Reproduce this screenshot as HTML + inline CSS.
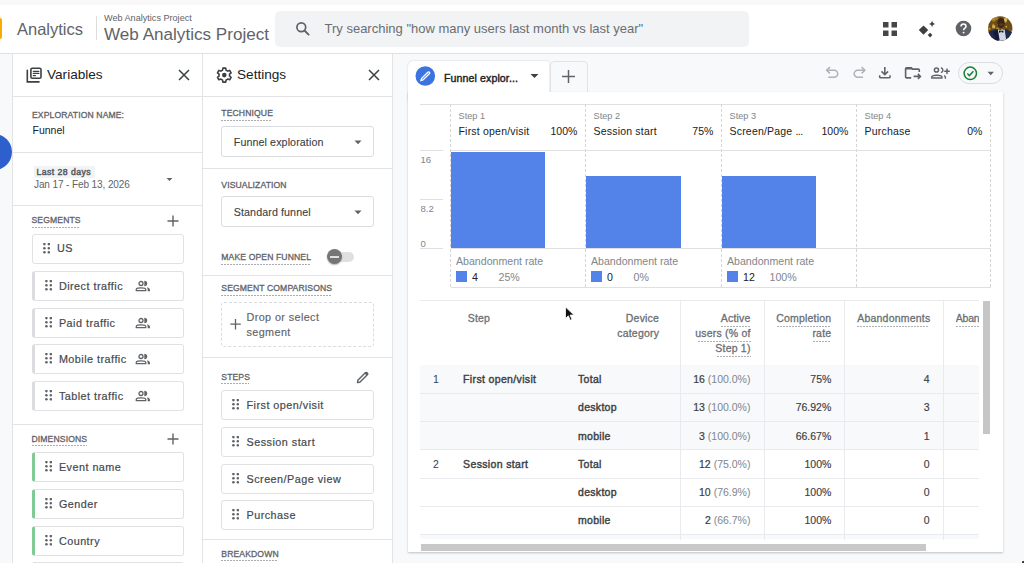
<!DOCTYPE html>
<html><head><meta charset="utf-8"><style>
html,body{margin:0;padding:0;width:1024px;height:563px;overflow:hidden;font-family:"Liberation Sans", sans-serif;}
body{position:relative;}
</style></head><body>
<div style="position:absolute;left:0px;top:0px;width:1024px;height:563px;background:#f8f9fa"></div><div style="position:absolute;left:0px;top:0px;width:1024px;height:5px;background:#f9f9f9"></div><div style="position:absolute;left:0px;top:5px;width:1024px;height:48px;background:#fff"></div><div style="position:absolute;left:0px;top:53px;width:1024px;height:1px;background:#dfe1e5"></div><div style="position:absolute;left:-3px;top:18px;width:5px;height:21px;background:#f9ab00;border-radius:2px"></div><div style="position:absolute;left:17.00px;top:21.03px;font-size:16.5px;line-height:16.5px;color:#5f6368;font-weight:normal;white-space:nowrap;">Analytics</div><div style="position:absolute;left:96px;top:16px;width:1px;height:24px;background:#dadce0"></div><div style="position:absolute;left:104.00px;top:13.50px;font-size:9.1px;line-height:9.1px;color:#5f6368;font-weight:normal;white-space:nowrap;">Web Analytics Project</div><div style="position:absolute;left:104.00px;top:26.02px;font-size:17.1px;line-height:17.1px;color:#5f6368;font-weight:normal;white-space:nowrap;">Web Analytics Project</div><div style="position:absolute;left:275px;top:11px;width:474px;height:36px;background:#f1f3f4;border-radius:5px"></div><svg style="position:absolute;left:294px;top:20px" width="17" height="17" viewBox="0 0 17 17"><circle cx="7.3" cy="7.3" r="4.4" fill="none" stroke="#5f6368" stroke-width="1.7"/><path d="M10.5 10.5 L14.6 14.6" stroke="#5f6368" stroke-width="1.9" stroke-linecap="round"/></svg><div style="position:absolute;left:324.50px;top:21.75px;font-size:13px;line-height:13px;color:#6a6e73;font-weight:normal;white-space:nowrap;">Try searching "how many users last month vs last year"</div><svg style="position:absolute;left:882px;top:21px" width="16" height="16" viewBox="0 0 16 16"><rect x="1" y="1" width="5.5" height="5.5" fill="#444746"/><rect x="9.5" y="1" width="5.5" height="5.5" fill="#444746"/><rect x="1" y="9.5" width="5.5" height="5.5" fill="#444746"/><rect x="9.5" y="9.5" width="5.5" height="5.5" fill="#444746"/></svg><svg style="position:absolute;left:917px;top:19px" width="20" height="20" viewBox="0 0 20 20"><path d="M1.8 11.1 L6.5 6.4 L11.2 11.1 L6.5 15.8 Z" fill="#3c4043"/><path d="M15.1 1.6 C15.5 3.6 16.2 4.6 18.3 5 C16.2 5.4 15.5 6.4 15.1 8.4 C14.7 6.4 14 5.4 11.9 5 C14 4.6 14.7 3.6 15.1 1.6 Z" fill="#3c4043"/><path d="M13.1 13.8 L15.4 16.1 L13.1 18.4 L10.8 16.1 Z" fill="#3c4043"/></svg><svg style="position:absolute;left:955px;top:20px" width="17" height="17" viewBox="0 0 17 17"><circle cx="8.5" cy="8.5" r="7.8" fill="#5f6368"/><path d="M6 6.6 C6 4.9 7.2 4.1 8.5 4.1 C9.9 4.1 11 5 11 6.4 C11 8.2 8.6 8.2 8.6 10.3" fill="none" stroke="#fff" stroke-width="1.5"/><circle cx="8.6" cy="12.6" r="0.95" fill="#fff"/></svg><svg style="position:absolute;left:987px;top:16px" width="26" height="26" viewBox="0 0 26 26"><defs><clipPath id="av"><circle cx="13.2" cy="12.5" r="12.2"/></clipPath></defs><g clip-path="url(#av)"><rect width="26" height="26" fill="#6a4c14"/><circle cx="6.2" cy="8.7" r="1.2" fill="#b8892a" opacity="0.75"/><circle cx="16.3" cy="1.0" r="0.8" fill="#b8892a" opacity="0.75"/><circle cx="6.7" cy="3.7" r="2.0" fill="#b8892a" opacity="0.75"/><circle cx="14.1" cy="8.8" r="1.3" fill="#d4a83a" opacity="0.75"/><circle cx="6.0" cy="2.4" r="1.9" fill="#b8892a" opacity="0.75"/><circle cx="19.3" cy="10.7" r="0.9" fill="#e8c050" opacity="0.75"/><circle cx="7.8" cy="0.5" r="1.8" fill="#b8892a" opacity="0.75"/><circle cx="15.5" cy="14.7" r="1.3" fill="#b8892a" opacity="0.75"/><circle cx="10.3" cy="12.8" r="1.3" fill="#d4a83a" opacity="0.75"/><circle cx="22.9" cy="1.6" r="1.0" fill="#d4a83a" opacity="0.75"/><circle cx="6.7" cy="10.8" r="1.7" fill="#f2d36a" opacity="0.75"/><circle cx="10.9" cy="13.3" r="1.5" fill="#b8892a" opacity="0.75"/><circle cx="15.2" cy="14.5" r="1.6" fill="#e8c050" opacity="0.75"/><circle cx="22.3" cy="15.9" r="1.6" fill="#d4a83a" opacity="0.75"/><circle cx="18.2" cy="5.2" r="1.5" fill="#e8c050" opacity="0.75"/><circle cx="18.6" cy="3.4" r="1.8" fill="#f2d36a" opacity="0.75"/><circle cx="7.4" cy="1.0" r="1.8" fill="#b8892a" opacity="0.75"/><circle cx="2.3" cy="12.8" r="1.3" fill="#d4a83a" opacity="0.75"/><circle cx="0.5" cy="6.8" r="1.3" fill="#e8c050" opacity="0.75"/><circle cx="1.1" cy="9.8" r="0.9" fill="#f2d36a" opacity="0.75"/><circle cx="14.3" cy="14.8" r="1.1" fill="#d4a83a" opacity="0.75"/><circle cx="26.0" cy="5.0" r="0.9" fill="#e8c050" opacity="0.75"/><circle cx="24.7" cy="15.5" r="1.1" fill="#f2d36a" opacity="0.75"/><circle cx="4.1" cy="0.7" r="1.8" fill="#f2d36a" opacity="0.75"/><circle cx="9.4" cy="2.2" r="1.8" fill="#b8892a" opacity="0.75"/><circle cx="12.0" cy="8.3" r="1.6" fill="#e8c050" opacity="0.75"/><path d="M0 26 L0 17 C3 14.5 7 13.3 10.5 13 L14 15 L17.5 13 C21 13.5 24 15 26 17 L26 26 Z" fill="#1f2a4c"/><path d="M10.8 13.2 L14 15 L17.6 13.2 L19.5 26 L11 26 Z" fill="#d2d5e6"/><path d="M10.8 13.2 L12.6 24 L9.5 26 L6 16 Z" fill="#141b36"/><ellipse cx="14" cy="7" rx="3.7" ry="5" fill="#3a2418"/><ellipse cx="14.2" cy="8.5" rx="2.2" ry="1.2" fill="#5a3b2a"/><path d="M12 14.6 L14.2 15.5 L16.4 14.6 L16.4 16.8 L14.2 15.9 L12 16.8 Z" fill="#0d0d0d"/></g></svg><div style="position:absolute;left:-24px;top:133.5px;width:36px;height:36px;border-radius:50%;background:#2d60cc"></div><div style="position:absolute;left:12px;top:54px;width:190px;height:509px;background:#fff"></div><div style="position:absolute;left:12px;top:54px;width:1px;height:509px;background:#e3e3e3"></div><div style="position:absolute;left:202px;top:54px;width:1px;height:509px;background:#e3e3e3"></div><div style="position:absolute;left:13px;top:96px;width:189px;height:1px;background:#e3e3e3"></div><svg style="position:absolute;left:26px;top:66px" width="17" height="17" viewBox="0 0 17 17"><path d="M1.3 4.3 V15.9 H13" fill="none" stroke="#3c4043" stroke-width="1.6" stroke-linecap="round"/><rect x="4.9" y="2.2" width="10.1" height="10.1" rx="1.3" fill="none" stroke="#3c4043" stroke-width="1.6"/><path d="M7.3 5.3 H12.9 M7.3 7.4 H12.9 M7.3 9.7 H9.4" stroke="#3c4043" stroke-width="1.2" stroke-linecap="round"/></svg><div style="position:absolute;left:47.00px;top:68.49px;font-size:13.6px;line-height:13.6px;color:#202124;font-weight:normal;white-space:nowrap;">Variables</div><svg style="position:absolute;left:178px;top:69px" width="12" height="12" viewBox="0 0 12 12"><path d="M1 1 L11 11 M11 1 L1 11" stroke="#3c4043" stroke-width="1.5"/></svg><div style="position:absolute;left:32.00px;top:110.62px;font-size:8.6px;line-height:8.6px;color:#5f6368;font-weight:normal;white-space:nowrap;letter-spacing:0.12px;-webkit-text-stroke:0.3px #5f6368">EXPLORATION NAME:</div><div style="position:absolute;left:32.50px;top:124.61px;font-size:10.5px;line-height:10.5px;color:#202124;font-weight:normal;white-space:nowrap;">Funnel</div><div style="position:absolute;left:13px;top:152px;width:189px;height:1px;background:#e3e3e3"></div><div style="position:absolute;left:34px;top:166.2px;width:61px;height:12.2px;background:#f1f3f4"></div><div style="position:absolute;left:36.50px;top:167.64px;font-size:8.7px;line-height:8.7px;color:#54585d;font-weight:normal;white-space:nowrap;letter-spacing:0.45px;-webkit-text-stroke:0.45px #54585d">Last 28 days</div><div style="position:absolute;left:34.00px;top:180.13px;font-size:10px;line-height:10px;color:#5f6368;font-weight:normal;white-space:nowrap;letter-spacing:-0.1px">Jan 17 - Feb 13, 2026</div><svg style="position:absolute;left:166px;top:177px" width="7" height="5" viewBox="0 0 7 5"><path d="M0.5 1 L6.5 1 L3.5 4 Z" fill="#5f6368"/></svg><div style="position:absolute;left:13px;top:205px;width:189px;height:1px;background:#e3e3e3"></div><div style="position:absolute;left:31.50px;top:216.47px;font-size:8.6px;line-height:8.6px;color:#5f6368;font-weight:normal;white-space:nowrap;letter-spacing:0.12px;-webkit-text-stroke:0.3px #5f6368">SEGMENTS</div><div style="position:absolute;left:31.5px;top:227.15px;width:48px;height:1px;background-image:linear-gradient(to right,#a9adb1 66%,transparent 66%);background-size:3px 1px"></div><svg style="position:absolute;left:167px;top:215px" width="12" height="12" viewBox="0 0 12 12"><path d="M6 0.5 V11.5 M0.5 6 H11.5" stroke="#5f6368" stroke-width="1.4"/></svg><div style="position:absolute;left:31.5px;top:233.6px;width:152.5px;height:30.4px;background:#fff;border:1px solid #e0e1e3;border-radius:3px;box-sizing:border-box"></div><svg style="position:absolute;left:42.5px;top:242.79999999999998px" width="7" height="11" viewBox="0 0 7 11"><circle cx="1.4" cy="1.1" r="1.3" fill="#5f6368"/><circle cx="5.800000000000001" cy="1.1" r="1.3" fill="#5f6368"/><circle cx="1.4" cy="5.199999999999999" r="1.3" fill="#5f6368"/><circle cx="5.800000000000001" cy="5.199999999999999" r="1.3" fill="#5f6368"/><circle cx="1.4" cy="9.299999999999999" r="1.3" fill="#5f6368"/><circle cx="5.800000000000001" cy="9.299999999999999" r="1.3" fill="#5f6368"/></svg><div style="position:absolute;left:57.00px;top:243.46px;font-size:10.8px;line-height:10.8px;color:#45494e;font-weight:normal;white-space:nowrap;letter-spacing:0.48px;-webkit-text-stroke:0.2px #45494e">US</div><div style="position:absolute;left:31.5px;top:271px;width:152.5px;height:30px;background:#fff;border:1px solid #e0e1e3;border-radius:3px;box-sizing:border-box;border-left:3px solid #dadce0"></div><svg style="position:absolute;left:44.5px;top:280.2px" width="7" height="11" viewBox="0 0 7 11"><circle cx="1.4" cy="1.1" r="1.3" fill="#5f6368"/><circle cx="5.800000000000001" cy="1.1" r="1.3" fill="#5f6368"/><circle cx="1.4" cy="5.199999999999999" r="1.3" fill="#5f6368"/><circle cx="5.800000000000001" cy="5.199999999999999" r="1.3" fill="#5f6368"/><circle cx="1.4" cy="9.299999999999999" r="1.3" fill="#5f6368"/><circle cx="5.800000000000001" cy="9.299999999999999" r="1.3" fill="#5f6368"/></svg><div style="position:absolute;left:58.90px;top:280.86px;font-size:10.8px;line-height:10.8px;color:#45494e;font-weight:normal;white-space:nowrap;letter-spacing:0.48px;-webkit-text-stroke:0.2px #45494e">Direct traffic</div><svg style="position:absolute;left:134.5px;top:279.5px" width="16" height="12" viewBox="0 0 16 12"><circle cx="6" cy="3.5" r="2" fill="none" stroke="#5f6368" stroke-width="1.3"/><path d="M1.25 10.65 V9.6 C1.25 8.3 3.6 7.85 6 7.85 C8.4 7.85 10.75 8.3 10.75 9.6 V10.65 Z" fill="none" stroke="#5f6368" stroke-width="1.3" stroke-linejoin="round"/><path d="M9.3 0.8 A2.9 2.7 0 0 1 9.3 6.2 Z" fill="#5f6368"/><path d="M11.9 7.3 C13.9 7.7 15 8.9 15 10.2 V11.3 H12.7 V10.2 C12.7 9 12.4 8 11.9 7.3 Z" fill="#5f6368"/></svg><div style="position:absolute;left:31.5px;top:308px;width:152.5px;height:30px;background:#fff;border:1px solid #e0e1e3;border-radius:3px;box-sizing:border-box;border-left:3px solid #dadce0"></div><svg style="position:absolute;left:44.5px;top:317.2px" width="7" height="11" viewBox="0 0 7 11"><circle cx="1.4" cy="1.1" r="1.3" fill="#5f6368"/><circle cx="5.800000000000001" cy="1.1" r="1.3" fill="#5f6368"/><circle cx="1.4" cy="5.199999999999999" r="1.3" fill="#5f6368"/><circle cx="5.800000000000001" cy="5.199999999999999" r="1.3" fill="#5f6368"/><circle cx="1.4" cy="9.299999999999999" r="1.3" fill="#5f6368"/><circle cx="5.800000000000001" cy="9.299999999999999" r="1.3" fill="#5f6368"/></svg><div style="position:absolute;left:58.90px;top:317.86px;font-size:10.8px;line-height:10.8px;color:#45494e;font-weight:normal;white-space:nowrap;letter-spacing:0.48px;-webkit-text-stroke:0.2px #45494e">Paid traffic</div><svg style="position:absolute;left:134.5px;top:316.5px" width="16" height="12" viewBox="0 0 16 12"><circle cx="6" cy="3.5" r="2" fill="none" stroke="#5f6368" stroke-width="1.3"/><path d="M1.25 10.65 V9.6 C1.25 8.3 3.6 7.85 6 7.85 C8.4 7.85 10.75 8.3 10.75 9.6 V10.65 Z" fill="none" stroke="#5f6368" stroke-width="1.3" stroke-linejoin="round"/><path d="M9.3 0.8 A2.9 2.7 0 0 1 9.3 6.2 Z" fill="#5f6368"/><path d="M11.9 7.3 C13.9 7.7 15 8.9 15 10.2 V11.3 H12.7 V10.2 C12.7 9 12.4 8 11.9 7.3 Z" fill="#5f6368"/></svg><div style="position:absolute;left:31.5px;top:344px;width:152.5px;height:30px;background:#fff;border:1px solid #e0e1e3;border-radius:3px;box-sizing:border-box;border-left:3px solid #dadce0"></div><svg style="position:absolute;left:44.5px;top:353.2px" width="7" height="11" viewBox="0 0 7 11"><circle cx="1.4" cy="1.1" r="1.3" fill="#5f6368"/><circle cx="5.800000000000001" cy="1.1" r="1.3" fill="#5f6368"/><circle cx="1.4" cy="5.199999999999999" r="1.3" fill="#5f6368"/><circle cx="5.800000000000001" cy="5.199999999999999" r="1.3" fill="#5f6368"/><circle cx="1.4" cy="9.299999999999999" r="1.3" fill="#5f6368"/><circle cx="5.800000000000001" cy="9.299999999999999" r="1.3" fill="#5f6368"/></svg><div style="position:absolute;left:58.90px;top:353.86px;font-size:10.8px;line-height:10.8px;color:#45494e;font-weight:normal;white-space:nowrap;letter-spacing:0.48px;-webkit-text-stroke:0.2px #45494e">Mobile traffic</div><svg style="position:absolute;left:134.5px;top:352.5px" width="16" height="12" viewBox="0 0 16 12"><circle cx="6" cy="3.5" r="2" fill="none" stroke="#5f6368" stroke-width="1.3"/><path d="M1.25 10.65 V9.6 C1.25 8.3 3.6 7.85 6 7.85 C8.4 7.85 10.75 8.3 10.75 9.6 V10.65 Z" fill="none" stroke="#5f6368" stroke-width="1.3" stroke-linejoin="round"/><path d="M9.3 0.8 A2.9 2.7 0 0 1 9.3 6.2 Z" fill="#5f6368"/><path d="M11.9 7.3 C13.9 7.7 15 8.9 15 10.2 V11.3 H12.7 V10.2 C12.7 9 12.4 8 11.9 7.3 Z" fill="#5f6368"/></svg><div style="position:absolute;left:31.5px;top:381px;width:152.5px;height:30px;background:#fff;border:1px solid #e0e1e3;border-radius:3px;box-sizing:border-box;border-left:3px solid #dadce0"></div><svg style="position:absolute;left:44.5px;top:390.2px" width="7" height="11" viewBox="0 0 7 11"><circle cx="1.4" cy="1.1" r="1.3" fill="#5f6368"/><circle cx="5.800000000000001" cy="1.1" r="1.3" fill="#5f6368"/><circle cx="1.4" cy="5.199999999999999" r="1.3" fill="#5f6368"/><circle cx="5.800000000000001" cy="5.199999999999999" r="1.3" fill="#5f6368"/><circle cx="1.4" cy="9.299999999999999" r="1.3" fill="#5f6368"/><circle cx="5.800000000000001" cy="9.299999999999999" r="1.3" fill="#5f6368"/></svg><div style="position:absolute;left:58.90px;top:390.86px;font-size:10.8px;line-height:10.8px;color:#45494e;font-weight:normal;white-space:nowrap;letter-spacing:0.48px;-webkit-text-stroke:0.2px #45494e">Tablet traffic</div><svg style="position:absolute;left:134.5px;top:389.5px" width="16" height="12" viewBox="0 0 16 12"><circle cx="6" cy="3.5" r="2" fill="none" stroke="#5f6368" stroke-width="1.3"/><path d="M1.25 10.65 V9.6 C1.25 8.3 3.6 7.85 6 7.85 C8.4 7.85 10.75 8.3 10.75 9.6 V10.65 Z" fill="none" stroke="#5f6368" stroke-width="1.3" stroke-linejoin="round"/><path d="M9.3 0.8 A2.9 2.7 0 0 1 9.3 6.2 Z" fill="#5f6368"/><path d="M11.9 7.3 C13.9 7.7 15 8.9 15 10.2 V11.3 H12.7 V10.2 C12.7 9 12.4 8 11.9 7.3 Z" fill="#5f6368"/></svg><div style="position:absolute;left:13px;top:424px;width:189px;height:1px;background:#e3e3e3"></div><div style="position:absolute;left:31.50px;top:434.72px;font-size:8.6px;line-height:8.6px;color:#5f6368;font-weight:normal;white-space:nowrap;letter-spacing:0.12px;-webkit-text-stroke:0.3px #5f6368">DIMENSIONS</div><div style="position:absolute;left:31.5px;top:445.4px;width:55px;height:1px;background-image:linear-gradient(to right,#a9adb1 66%,transparent 66%);background-size:3px 1px"></div><svg style="position:absolute;left:167px;top:433px" width="12" height="12" viewBox="0 0 12 12"><path d="M6 0.5 V11.5 M0.5 6 H11.5" stroke="#5f6368" stroke-width="1.4"/></svg><div style="position:absolute;left:31.5px;top:452px;width:152.5px;height:30px;background:#fff;border:1px solid #e0e1e3;border-radius:3px;box-sizing:border-box;border-left:3px solid #81c995"></div><svg style="position:absolute;left:44.5px;top:461.2px" width="7" height="11" viewBox="0 0 7 11"><circle cx="1.4" cy="1.1" r="1.3" fill="#5f6368"/><circle cx="5.800000000000001" cy="1.1" r="1.3" fill="#5f6368"/><circle cx="1.4" cy="5.199999999999999" r="1.3" fill="#5f6368"/><circle cx="5.800000000000001" cy="5.199999999999999" r="1.3" fill="#5f6368"/><circle cx="1.4" cy="9.299999999999999" r="1.3" fill="#5f6368"/><circle cx="5.800000000000001" cy="9.299999999999999" r="1.3" fill="#5f6368"/></svg><div style="position:absolute;left:58.90px;top:461.86px;font-size:10.8px;line-height:10.8px;color:#45494e;font-weight:normal;white-space:nowrap;letter-spacing:0.48px;-webkit-text-stroke:0.2px #45494e">Event name</div><div style="position:absolute;left:31.5px;top:489px;width:152.5px;height:30px;background:#fff;border:1px solid #e0e1e3;border-radius:3px;box-sizing:border-box;border-left:3px solid #81c995"></div><svg style="position:absolute;left:44.5px;top:498.2px" width="7" height="11" viewBox="0 0 7 11"><circle cx="1.4" cy="1.1" r="1.3" fill="#5f6368"/><circle cx="5.800000000000001" cy="1.1" r="1.3" fill="#5f6368"/><circle cx="1.4" cy="5.199999999999999" r="1.3" fill="#5f6368"/><circle cx="5.800000000000001" cy="5.199999999999999" r="1.3" fill="#5f6368"/><circle cx="1.4" cy="9.299999999999999" r="1.3" fill="#5f6368"/><circle cx="5.800000000000001" cy="9.299999999999999" r="1.3" fill="#5f6368"/></svg><div style="position:absolute;left:58.90px;top:498.86px;font-size:10.8px;line-height:10.8px;color:#45494e;font-weight:normal;white-space:nowrap;letter-spacing:0.48px;-webkit-text-stroke:0.2px #45494e">Gender</div><div style="position:absolute;left:31.5px;top:526px;width:152.5px;height:30px;background:#fff;border:1px solid #e0e1e3;border-radius:3px;box-sizing:border-box;border-left:3px solid #81c995"></div><svg style="position:absolute;left:44.5px;top:535.2px" width="7" height="11" viewBox="0 0 7 11"><circle cx="1.4" cy="1.1" r="1.3" fill="#5f6368"/><circle cx="5.800000000000001" cy="1.1" r="1.3" fill="#5f6368"/><circle cx="1.4" cy="5.199999999999999" r="1.3" fill="#5f6368"/><circle cx="5.800000000000001" cy="5.199999999999999" r="1.3" fill="#5f6368"/><circle cx="1.4" cy="9.299999999999999" r="1.3" fill="#5f6368"/><circle cx="5.800000000000001" cy="9.299999999999999" r="1.3" fill="#5f6368"/></svg><div style="position:absolute;left:58.90px;top:535.86px;font-size:10.8px;line-height:10.8px;color:#45494e;font-weight:normal;white-space:nowrap;letter-spacing:0.48px;-webkit-text-stroke:0.2px #45494e">Country</div><div style="position:absolute;left:31.5px;top:562px;width:152.5px;height:30px;background:#fff;border:1px solid #e0e1e3;border-radius:3px;box-sizing:border-box;border-left:3px solid #81c995"></div><svg style="position:absolute;left:44.5px;top:571.2px" width="7" height="11" viewBox="0 0 7 11"><circle cx="1.4" cy="1.1" r="1.3" fill="#5f6368"/><circle cx="5.800000000000001" cy="1.1" r="1.3" fill="#5f6368"/><circle cx="1.4" cy="5.199999999999999" r="1.3" fill="#5f6368"/><circle cx="5.800000000000001" cy="5.199999999999999" r="1.3" fill="#5f6368"/><circle cx="1.4" cy="9.299999999999999" r="1.3" fill="#5f6368"/><circle cx="5.800000000000001" cy="9.299999999999999" r="1.3" fill="#5f6368"/></svg><div style="position:absolute;left:58.90px;top:571.86px;font-size:10.8px;line-height:10.8px;color:#45494e;font-weight:normal;white-space:nowrap;letter-spacing:0.48px;-webkit-text-stroke:0.2px #45494e"></div><div style="position:absolute;left:203px;top:54px;width:189px;height:509px;background:#fff"></div><div style="position:absolute;left:392px;top:54px;width:1px;height:509px;background:#e3e3e3"></div><div style="position:absolute;left:203px;top:96px;width:189px;height:1px;background:#e3e3e3"></div><svg style="position:absolute;left:215px;top:66px" width="18" height="18" viewBox="0 0 18 18"><g transform="translate(0.3 0.6)"><path fill="none" stroke="#3c4043" stroke-width="1.6" stroke-linejoin="round" d="M7.6 1.5 H10.4 L10.8 3.6 C11.4 3.8 11.9 4.1 12.4 4.5 L14.4 3.8 L15.8 6.2 L14.2 7.6 C14.3 8.2 14.3 8.8 14.2 9.4 L15.8 10.8 L14.4 13.2 L12.4 12.5 C11.9 12.9 11.4 13.2 10.8 13.4 L10.4 15.5 H7.6 L7.2 13.4 C6.6 13.2 6.1 12.9 5.6 12.5 L3.6 13.2 L2.2 10.8 L3.8 9.4 C3.7 8.8 3.7 8.2 3.8 7.6 L2.2 6.2 L3.6 3.8 L5.6 4.5 C6.1 4.1 6.6 3.8 7.2 3.6 Z"/><circle cx="9" cy="8.5" r="2.3" fill="#3c4043"/></g></svg><div style="position:absolute;left:237.00px;top:68.49px;font-size:13.6px;line-height:13.6px;color:#202124;font-weight:normal;white-space:nowrap;">Settings</div><svg style="position:absolute;left:367.5px;top:69px" width="12" height="12" viewBox="0 0 12 12"><path d="M1 1 L11 11 M11 1 L1 11" stroke="#3c4043" stroke-width="1.5"/></svg><div style="position:absolute;left:221.30px;top:109.32px;font-size:8.6px;line-height:8.6px;color:#5f6368;font-weight:normal;white-space:nowrap;letter-spacing:0.12px;-webkit-text-stroke:0.3px #5f6368">TECHNIQUE</div><div style="position:absolute;left:221.3px;top:120.0px;width:50.6px;height:1px;background-image:linear-gradient(to right,#a9adb1 66%,transparent 66%);background-size:3px 1px"></div><div style="position:absolute;left:221px;top:126px;width:153px;height:30.5px;background:#fff;border:1px solid #dadce0;border-radius:3px;box-sizing:border-box"></div><div style="position:absolute;left:233.75px;top:136.74px;font-size:10.7px;line-height:10.7px;color:#3c4043;font-weight:normal;white-space:nowrap;letter-spacing:0.1px;-webkit-text-stroke:0.1px #3c4043">Funnel exploration</div><svg style="position:absolute;left:354px;top:139.5px" width="8" height="5" viewBox="0 0 8 5"><path d="M0.5 0.5 L7.5 0.5 L4 4.2 Z" fill="#5f6368"/></svg><div style="position:absolute;left:203px;top:168px;width:189px;height:1px;background:#e3e3e3"></div><div style="position:absolute;left:221.30px;top:180.82px;font-size:8.6px;line-height:8.6px;color:#5f6368;font-weight:normal;white-space:nowrap;letter-spacing:0.12px;-webkit-text-stroke:0.3px #5f6368">VISUALIZATION</div><div style="position:absolute;left:221px;top:196px;width:153px;height:30.5px;background:#fff;border:1px solid #dadce0;border-radius:3px;box-sizing:border-box"></div><div style="position:absolute;left:233.75px;top:206.74px;font-size:10.7px;line-height:10.7px;color:#3c4043;font-weight:normal;white-space:nowrap;letter-spacing:0.1px;-webkit-text-stroke:0.1px #3c4043">Standard funnel</div><svg style="position:absolute;left:354px;top:209.5px" width="8" height="5" viewBox="0 0 8 5"><path d="M0.5 0.5 L7.5 0.5 L4 4.2 Z" fill="#5f6368"/></svg><div style="position:absolute;left:221.30px;top:252.92px;font-size:8.6px;line-height:8.6px;color:#5f6368;font-weight:normal;white-space:nowrap;letter-spacing:0.12px;-webkit-text-stroke:0.3px #5f6368">MAKE OPEN FUNNEL</div><div style="position:absolute;left:221.3px;top:263.59999999999997px;width:89.6px;height:1px;background-image:linear-gradient(to right,#a9adb1 66%,transparent 66%);background-size:3px 1px"></div><div style="position:absolute;left:330px;top:252px;width:24px;height:10px;background:#e0e0e0;border-radius:5px"></div><div style="position:absolute;left:326.8px;top:249.4px;width:15px;height:15px;border-radius:50%;background:#757575;box-shadow:0 1px 1.5px rgba(0,0,0,0.3)"></div><div style="position:absolute;left:330px;top:256.1px;width:9px;height:1.9px;background:#dedede"></div><div style="position:absolute;left:203px;top:275px;width:189px;height:1px;background:#e3e3e3"></div><div style="position:absolute;left:221.30px;top:284.47px;font-size:8.6px;line-height:8.6px;color:#5f6368;font-weight:normal;white-space:nowrap;letter-spacing:0.12px;-webkit-text-stroke:0.3px #5f6368">SEGMENT COMPARISONS</div><div style="position:absolute;left:221.3px;top:295.15px;width:109.8px;height:1px;background-image:linear-gradient(to right,#a9adb1 66%,transparent 66%);background-size:3px 1px"></div><div style="position:absolute;left:221px;top:301.5px;width:153px;height:45.5px;border:1px dashed #dadce0;border-radius:3px;box-sizing:border-box"></div><svg style="position:absolute;left:230px;top:319px" width="12" height="11" viewBox="0 0 12 11"><path d="M5.5 0 V10.5 M0.3 5.2 H10.8" stroke="#5f6368" stroke-width="1.3"/></svg><div style="position:absolute;left:246.50px;top:312.06px;font-size:10.8px;line-height:10.8px;color:#5f6368;font-weight:normal;white-space:nowrap;letter-spacing:0.4px;-webkit-text-stroke:0.15px #5f6368">Drop or select</div><div style="position:absolute;left:246.50px;top:326.96px;font-size:10.8px;line-height:10.8px;color:#5f6368;font-weight:normal;white-space:nowrap;letter-spacing:0.4px;-webkit-text-stroke:0.15px #5f6368">segment</div><div style="position:absolute;left:203px;top:357px;width:189px;height:1px;background:#e3e3e3"></div><div style="position:absolute;left:221.30px;top:372.52px;font-size:8.6px;line-height:8.6px;color:#5f6368;font-weight:normal;white-space:nowrap;letter-spacing:0.12px;-webkit-text-stroke:0.3px #5f6368">STEPS</div><div style="position:absolute;left:221.3px;top:383.2px;width:27.7px;height:1px;background-image:linear-gradient(to right,#a9adb1 66%,transparent 66%);background-size:3px 1px"></div><svg style="position:absolute;left:356px;top:371px" width="13" height="13" viewBox="0 0 13 13"><path d="M1.5 11.6 L1.8 9.3 L9.3 1.8 C9.8 1.3 10.6 1.3 11.1 1.8 L11.3 2 C11.8 2.5 11.8 3.3 11.3 3.8 L3.8 11.3 Z" fill="none" stroke="#5f6368" stroke-width="1.4" stroke-linejoin="round"/><path d="M8.6 2.5 L9.6 1.6 C10 1.2 10.8 1.2 11.3 1.7 C11.8 2.2 11.8 3 11.4 3.4 L10.5 4.4 Z" fill="#5f6368"/></svg><div style="position:absolute;left:221px;top:390px;width:153px;height:30px;background:#fff;border:1px solid #e0e1e3;border-radius:3px;box-sizing:border-box"></div><svg style="position:absolute;left:232.4px;top:399.2px" width="7" height="11" viewBox="0 0 7 11"><circle cx="1.4" cy="1.1" r="1.3" fill="#5f6368"/><circle cx="5.800000000000001" cy="1.1" r="1.3" fill="#5f6368"/><circle cx="1.4" cy="5.199999999999999" r="1.3" fill="#5f6368"/><circle cx="5.800000000000001" cy="5.199999999999999" r="1.3" fill="#5f6368"/><circle cx="1.4" cy="9.299999999999999" r="1.3" fill="#5f6368"/><circle cx="5.800000000000001" cy="9.299999999999999" r="1.3" fill="#5f6368"/></svg><div style="position:absolute;left:246.50px;top:399.86px;font-size:10.8px;line-height:10.8px;color:#45494e;font-weight:normal;white-space:nowrap;letter-spacing:0.48px;-webkit-text-stroke:0.2px #45494e">First open/visit</div><div style="position:absolute;left:221px;top:427px;width:153px;height:30px;background:#fff;border:1px solid #e0e1e3;border-radius:3px;box-sizing:border-box"></div><svg style="position:absolute;left:232.4px;top:436.2px" width="7" height="11" viewBox="0 0 7 11"><circle cx="1.4" cy="1.1" r="1.3" fill="#5f6368"/><circle cx="5.800000000000001" cy="1.1" r="1.3" fill="#5f6368"/><circle cx="1.4" cy="5.199999999999999" r="1.3" fill="#5f6368"/><circle cx="5.800000000000001" cy="5.199999999999999" r="1.3" fill="#5f6368"/><circle cx="1.4" cy="9.299999999999999" r="1.3" fill="#5f6368"/><circle cx="5.800000000000001" cy="9.299999999999999" r="1.3" fill="#5f6368"/></svg><div style="position:absolute;left:246.50px;top:436.86px;font-size:10.8px;line-height:10.8px;color:#45494e;font-weight:normal;white-space:nowrap;letter-spacing:0.48px;-webkit-text-stroke:0.2px #45494e">Session start</div><div style="position:absolute;left:221px;top:464px;width:153px;height:30px;background:#fff;border:1px solid #e0e1e3;border-radius:3px;box-sizing:border-box"></div><svg style="position:absolute;left:232.4px;top:473.2px" width="7" height="11" viewBox="0 0 7 11"><circle cx="1.4" cy="1.1" r="1.3" fill="#5f6368"/><circle cx="5.800000000000001" cy="1.1" r="1.3" fill="#5f6368"/><circle cx="1.4" cy="5.199999999999999" r="1.3" fill="#5f6368"/><circle cx="5.800000000000001" cy="5.199999999999999" r="1.3" fill="#5f6368"/><circle cx="1.4" cy="9.299999999999999" r="1.3" fill="#5f6368"/><circle cx="5.800000000000001" cy="9.299999999999999" r="1.3" fill="#5f6368"/></svg><div style="position:absolute;left:246.50px;top:473.86px;font-size:10.8px;line-height:10.8px;color:#45494e;font-weight:normal;white-space:nowrap;letter-spacing:0.48px;-webkit-text-stroke:0.2px #45494e">Screen/Page view</div><div style="position:absolute;left:221px;top:500px;width:153px;height:30px;background:#fff;border:1px solid #e0e1e3;border-radius:3px;box-sizing:border-box"></div><svg style="position:absolute;left:232.4px;top:509.2px" width="7" height="11" viewBox="0 0 7 11"><circle cx="1.4" cy="1.1" r="1.3" fill="#5f6368"/><circle cx="5.800000000000001" cy="1.1" r="1.3" fill="#5f6368"/><circle cx="1.4" cy="5.199999999999999" r="1.3" fill="#5f6368"/><circle cx="5.800000000000001" cy="5.199999999999999" r="1.3" fill="#5f6368"/><circle cx="1.4" cy="9.299999999999999" r="1.3" fill="#5f6368"/><circle cx="5.800000000000001" cy="9.299999999999999" r="1.3" fill="#5f6368"/></svg><div style="position:absolute;left:246.50px;top:509.86px;font-size:10.8px;line-height:10.8px;color:#45494e;font-weight:normal;white-space:nowrap;letter-spacing:0.48px;-webkit-text-stroke:0.2px #45494e">Purchase</div><div style="position:absolute;left:203px;top:539px;width:189px;height:1px;background:#e3e3e3"></div><div style="position:absolute;left:221.30px;top:549.72px;font-size:8.6px;line-height:8.6px;color:#5f6368;font-weight:normal;white-space:nowrap;letter-spacing:0.12px;-webkit-text-stroke:0.3px #5f6368">BREAKDOWN</div><div style="position:absolute;left:221.3px;top:560.4px;width:55.45px;height:1px;background-image:linear-gradient(to right,#a9adb1 66%,transparent 66%);background-size:3px 1px"></div><div style="position:absolute;left:408px;top:61px;width:141px;height:40px;background:#fff;border-radius:5px 2px 0 0;box-shadow:0 0 1.5px rgba(60,64,67,0.3)"></div><div style="position:absolute;left:550px;top:61px;width:38px;height:31px;background:#f8f9fa;border:1px solid #e3e3e3;border-bottom:none;border-radius:5px 5px 0 0;box-sizing:border-box"></div><div style="position:absolute;left:408px;top:92px;width:595px;height:459.5px;background:#fff;box-shadow:0 1px 2px rgba(60,64,67,0.3)"></div><div style="position:absolute;left:408px;top:88px;width:141px;height:8px;background:#fff"></div><svg style="position:absolute;left:415px;top:66px" width="21" height="21" viewBox="0 0 21 21"><circle cx="10.3" cy="10" r="9.8" fill="#3b73e0"/><path d="M6 14.5 L6.5 12.5 L12.8 6.2 C13.3 5.7 14 5.7 14.4 6.1 C14.8 6.5 14.8 7.2 14.3 7.7 L8 14 Z" fill="none" stroke="#fff" stroke-width="1.3"/></svg><div style="position:absolute;left:444.00px;top:73.03px;font-size:10.6px;line-height:10.6px;color:#202124;font-weight:normal;white-space:nowrap;-webkit-text-stroke:0.4px #202124;letter-spacing:0.1px">Funnel explor...</div><svg style="position:absolute;left:530px;top:73px" width="9" height="6" viewBox="0 0 9 6"><path d="M0.5 1 L8.5 1 L4.5 5 Z" fill="#3c4043"/></svg><svg style="position:absolute;left:561px;top:69px" width="15" height="15" viewBox="0 0 15 15"><path d="M7.5 1 V14 M1 7.5 H14" stroke="#5f6368" stroke-width="1.5"/></svg><svg style="position:absolute;left:824px;top:65px" width="16" height="15" viewBox="0 0 16 15"><path d="M5.9 2.1 L2.6 5.25 L5.9 8.4" fill="none" stroke="#aeb1b5" stroke-width="1.5" stroke-linejoin="round"/><path d="M2.6 5.25 H10.2 A3.5 3.5 0 0 1 10.2 12.25 H4.3" fill="none" stroke="#aeb1b5" stroke-width="1.5"/></svg><svg style="position:absolute;left:851px;top:65px" width="16" height="15" viewBox="0 0 16 15"><path d="M10.6 2.1 L13.9 5.25 L10.6 8.4" fill="none" stroke="#aeb1b5" stroke-width="1.5" stroke-linejoin="round"/><path d="M13.9 5.25 H6.7 A3.5 3.5 0 0 0 6.7 12.25 H12" fill="none" stroke="#aeb1b5" stroke-width="1.5"/></svg><svg style="position:absolute;left:877px;top:65px" width="16" height="15" viewBox="0 0 16 15"><path d="M7.8 2 V9.5 M4.5 6.4 L7.8 9.7 L11.1 6.4" fill="none" stroke="#5f6368" stroke-width="1.6"/><path d="M2.7 10.2 V12.1 C2.7 12.5 3 12.7 3.4 12.7 H12.3 C12.7 12.7 13 12.5 13 12.1 V10.2" fill="none" stroke="#5f6368" stroke-width="1.6"/></svg><svg style="position:absolute;left:903px;top:65px" width="19" height="16" viewBox="0 0 19 16"><path d="M8.2 12.9 H3.6 C3 12.9 2.6 12.5 2.6 11.9 V3.8 C2.6 3.2 3 2.8 3.6 2.8 H8.3 L9.6 4.1 H15.3 C15.9 4.1 16.3 4.5 16.3 5.1 V7" fill="none" stroke="#5f6368" stroke-width="1.6"/><path d="M3 2.8 H8.3 L9.3 4.4 H3 Z" fill="#5f6368"/><path d="M10.6 11.4 H17.3 M14.9 8.9 L17.4 11.4 L14.9 13.9" fill="none" stroke="#5f6368" stroke-width="1.6"/></svg><svg style="position:absolute;left:930px;top:65px" width="20" height="15" viewBox="0 0 20 15"><circle cx="6.45" cy="4.95" r="2.05" fill="none" stroke="#5f6368" stroke-width="1.5"/><path d="M1.75 13 V12 C1.75 10.8 4.2 10.2 6.85 10.2 C9.5 10.2 11.95 10.8 11.95 12 V13 Z" fill="none" stroke="#5f6368" stroke-width="1.5" stroke-linejoin="round"/><path d="M10.9 2.6 C12.4 3.3 13 4.2 13 5.15 C13 6.1 12.4 7 10.9 7.7" fill="none" stroke="#5f6368" stroke-width="1.4"/><path d="M14.2 10.6 C15.1 11.1 15.4 11.8 15.4 12.6 V13.7" fill="none" stroke="#5f6368" stroke-width="1.4"/><path d="M17 3.5 V9.1 M14.2 6.3 H19.8" stroke="#5f6368" stroke-width="1.5"/></svg><div style="position:absolute;left:957.5px;top:62px;width:45.5px;height:21.5px;border:1px solid #dadce0;border-radius:11px;box-sizing:border-box"></div><svg style="position:absolute;left:963px;top:65.5px" width="15" height="15" viewBox="0 0 15 15"><circle cx="7.3" cy="7.3" r="6.2" fill="none" stroke="#188038" stroke-width="1.5"/><path d="M4.3 7.5 L6.4 9.6 L10.4 5.3" fill="none" stroke="#188038" stroke-width="1.5"/></svg><svg style="position:absolute;left:986.5px;top:70.5px" width="8" height="5" viewBox="0 0 8 5"><path d="M0.5 0.8 L7 0.8 L3.75 4.2 Z" fill="#5f6368"/></svg><div style="position:absolute;left:420px;top:104px;width:571px;height:1px;background:#e0e0e0"></div><div style="position:absolute;left:450.0px;top:104px;width:1px;height:183px;background-image:linear-gradient(to bottom,#d5d5d5 60%,transparent 60%);background-size:1px 5px"></div><div style="position:absolute;left:585.0px;top:104px;width:1px;height:183px;background-image:linear-gradient(to bottom,#d5d5d5 60%,transparent 60%);background-size:1px 5px"></div><div style="position:absolute;left:721.0px;top:104px;width:1px;height:183px;background-image:linear-gradient(to bottom,#d5d5d5 60%,transparent 60%);background-size:1px 5px"></div><div style="position:absolute;left:856.0px;top:104px;width:1px;height:183px;background-image:linear-gradient(to bottom,#d5d5d5 60%,transparent 60%);background-size:1px 5px"></div><div style="position:absolute;left:990.0px;top:104px;width:1px;height:183px;background-image:linear-gradient(to bottom,#d5d5d5 60%,transparent 60%);background-size:1px 5px"></div><div style="position:absolute;left:451px;top:150px;width:540px;height:1px;background:#e0e0e0"></div><div style="position:absolute;left:420px;top:150px;width:23px;height:1px;background:#e0e0e0"></div><div style="position:absolute;left:420px;top:199px;width:23px;height:1px;background:#e0e0e0"></div><div style="position:absolute;left:420px;top:248px;width:23px;height:1px;background:#e0e0e0"></div><div style="position:absolute;left:420.50px;top:154.87px;font-size:9.6px;line-height:9.6px;color:#80868b;font-weight:normal;white-space:nowrap;">16</div><div style="position:absolute;left:420.50px;top:204.27px;font-size:9.6px;line-height:9.6px;color:#80868b;font-weight:normal;white-space:nowrap;">8.2</div><div style="position:absolute;left:420.50px;top:238.67px;font-size:9.6px;line-height:9.6px;color:#80868b;font-weight:normal;white-space:nowrap;">0</div><div style="position:absolute;left:451px;top:152px;width:94px;height:96.5px;background:#5383e8"></div><div style="position:absolute;left:586px;top:176px;width:95px;height:72.5px;background:#5383e8"></div><div style="position:absolute;left:721.5px;top:176px;width:94.5px;height:72.5px;background:#5383e8"></div><div style="position:absolute;left:451px;top:248px;width:540px;height:1px;background:#e0e0e0"></div><div style="position:absolute;left:451px;top:286.5px;width:540px;height:1px;background:#e0e0e0"></div><div style="position:absolute;left:458.50px;top:112.41px;font-size:9.2px;line-height:9.2px;color:#80868b;font-weight:normal;white-space:nowrap;">Step 1</div><div style="position:absolute;left:458.50px;top:125.86px;font-size:10.5px;line-height:10.5px;color:#202124;font-weight:normal;white-space:nowrap;letter-spacing:0.2px">First open/visit</div><div style="position:absolute;right:446.70px;top:126.41px;font-size:10.5px;line-height:10.5px;color:#202124;font-weight:normal;white-space:nowrap;text-align:right;">100%</div><div style="position:absolute;left:593.50px;top:112.41px;font-size:9.2px;line-height:9.2px;color:#80868b;font-weight:normal;white-space:nowrap;">Step 2</div><div style="position:absolute;left:593.50px;top:125.86px;font-size:10.5px;line-height:10.5px;color:#202124;font-weight:normal;white-space:nowrap;letter-spacing:0.2px">Session start</div><div style="position:absolute;right:310.70px;top:126.41px;font-size:10.5px;line-height:10.5px;color:#202124;font-weight:normal;white-space:nowrap;text-align:right;">75%</div><div style="position:absolute;left:729.50px;top:112.41px;font-size:9.2px;line-height:9.2px;color:#80868b;font-weight:normal;white-space:nowrap;">Step 3</div><div style="position:absolute;left:729.50px;top:125.86px;font-size:10.5px;line-height:10.5px;color:#202124;font-weight:normal;white-space:nowrap;letter-spacing:0.2px">Screen/Page <span style="letter-spacing:-0.6px">...</span></div><div style="position:absolute;right:175.70px;top:126.41px;font-size:10.5px;line-height:10.5px;color:#202124;font-weight:normal;white-space:nowrap;text-align:right;">100%</div><div style="position:absolute;left:864.50px;top:112.41px;font-size:9.2px;line-height:9.2px;color:#80868b;font-weight:normal;white-space:nowrap;">Step 4</div><div style="position:absolute;left:864.50px;top:125.86px;font-size:10.5px;line-height:10.5px;color:#202124;font-weight:normal;white-space:nowrap;letter-spacing:0.2px">Purchase</div><div style="position:absolute;right:41.70px;top:126.41px;font-size:10.5px;line-height:10.5px;color:#202124;font-weight:normal;white-space:nowrap;text-align:right;">0%</div><div style="position:absolute;left:456.00px;top:255.78px;font-size:10.6px;line-height:10.6px;color:#80868b;font-weight:normal;white-space:nowrap;">Abandonment rate</div><div style="position:absolute;left:455.5px;top:270.5px;width:11px;height:11px;background:#5383e8"></div><div style="position:absolute;left:472.00px;top:272.03px;font-size:10.6px;line-height:10.6px;color:#202124;font-weight:normal;white-space:nowrap;">4</div><div style="position:absolute;left:498.50px;top:272.03px;font-size:10.6px;line-height:10.6px;color:#80868b;font-weight:normal;white-space:nowrap;">25%</div><div style="position:absolute;left:591.00px;top:255.78px;font-size:10.6px;line-height:10.6px;color:#80868b;font-weight:normal;white-space:nowrap;">Abandonment rate</div><div style="position:absolute;left:590.5px;top:270.5px;width:11px;height:11px;background:#5383e8"></div><div style="position:absolute;left:607.00px;top:272.03px;font-size:10.6px;line-height:10.6px;color:#202124;font-weight:normal;white-space:nowrap;">0</div><div style="position:absolute;left:633.50px;top:272.03px;font-size:10.6px;line-height:10.6px;color:#80868b;font-weight:normal;white-space:nowrap;">0%</div><div style="position:absolute;left:727.00px;top:255.78px;font-size:10.6px;line-height:10.6px;color:#80868b;font-weight:normal;white-space:nowrap;">Abandonment rate</div><div style="position:absolute;left:726.5px;top:270.5px;width:11px;height:11px;background:#5383e8"></div><div style="position:absolute;left:743.00px;top:272.03px;font-size:10.6px;line-height:10.6px;color:#202124;font-weight:normal;white-space:nowrap;">12</div><div style="position:absolute;left:769.50px;top:272.03px;font-size:10.6px;line-height:10.6px;color:#80868b;font-weight:normal;white-space:nowrap;">100%</div><div style="position:absolute;left:420px;top:300px;width:559px;height:1px;background:#e8eaed"></div><div style="position:absolute;left:420px;top:365.2px;width:559px;height:28.25px;background:#f8f9fa"></div><div style="position:absolute;left:420px;top:393.45px;width:559px;height:28.25px;background:#f8f9fa"></div><div style="position:absolute;left:420px;top:421.7px;width:559px;height:28.25px;background:#f8f9fa"></div><div style="position:absolute;left:420px;top:449.95px;width:559px;height:28.25px;background:#fff"></div><div style="position:absolute;left:420px;top:478.2px;width:559px;height:28.25px;background:#fff"></div><div style="position:absolute;left:420px;top:506.45px;width:559px;height:28.25px;background:#fff"></div><div style="position:absolute;left:420px;top:534.7px;width:559px;height:4.8px;background:#f8f9fa"></div><div style="position:absolute;left:420px;top:392.95px;width:559px;height:1px;background:#e8eaed"></div><div style="position:absolute;left:420px;top:421.2px;width:559px;height:1px;background:#e8eaed"></div><div style="position:absolute;left:420px;top:449.45px;width:559px;height:1px;background:#e8eaed"></div><div style="position:absolute;left:420px;top:477.7px;width:559px;height:1px;background:#e8eaed"></div><div style="position:absolute;left:420px;top:505.95px;width:559px;height:1px;background:#e8eaed"></div><div style="position:absolute;left:420px;top:534.2px;width:559px;height:1px;background:#e8eaed"></div><div style="position:absolute;left:680px;top:300px;width:1px;height:240px;background:#e8eaed"></div><div style="position:absolute;left:763.5px;top:300px;width:1px;height:240px;background:#e8eaed"></div><div style="position:absolute;left:844.4px;top:300px;width:1px;height:240px;background:#e8eaed"></div><div style="position:absolute;left:942.6px;top:300px;width:1px;height:240px;background:#e8eaed"></div><div style="position:absolute;left:467.75px;top:313.11px;font-size:10.5px;line-height:10.5px;color:#6b6f74;font-weight:normal;white-space:nowrap;-webkit-text-stroke:0.3px currentColor;letter-spacing:0.2px">Step</div><div style="position:absolute;right:364.90px;top:313.11px;font-size:10.5px;line-height:10.5px;color:#6b6f74;font-weight:normal;white-space:nowrap;text-align:right;-webkit-text-stroke:0.3px currentColor;letter-spacing:0.2px">Device</div><div style="position:absolute;right:364.90px;top:328.11px;font-size:10.5px;line-height:10.5px;color:#6b6f74;font-weight:normal;white-space:nowrap;text-align:right;-webkit-text-stroke:0.3px currentColor;letter-spacing:0.2px">category</div><div style="position:absolute;right:273.40px;top:313.11px;font-size:10.5px;line-height:10.5px;color:#6b6f74;font-weight:normal;white-space:nowrap;text-align:right;-webkit-text-stroke:0.3px currentColor;letter-spacing:0.2px">Active</div><div style="position:absolute;right:273.40px;top:328.11px;font-size:10.5px;line-height:10.5px;color:#6b6f74;font-weight:normal;white-space:nowrap;text-align:right;-webkit-text-stroke:0.3px currentColor;letter-spacing:0.2px">users (% of</div><div style="position:absolute;right:273.40px;top:343.11px;font-size:10.5px;line-height:10.5px;color:#6b6f74;font-weight:normal;white-space:nowrap;text-align:right;-webkit-text-stroke:0.3px currentColor;letter-spacing:0.2px">Step 1)</div><div style="position:absolute;left:720.5px;top:325.6px;width:30.100000000000023px;height:1px;background-image:linear-gradient(to right,#aeb2b6 66%,transparent 66%);background-size:3px 1px"></div><div style="position:absolute;left:697.5px;top:341px;width:53.10000000000002px;height:1px;background-image:linear-gradient(to right,#aeb2b6 66%,transparent 66%);background-size:3px 1px"></div><div style="position:absolute;left:716.5px;top:356.4px;width:34.10000000000002px;height:1px;background-image:linear-gradient(to right,#aeb2b6 66%,transparent 66%);background-size:3px 1px"></div><div style="position:absolute;right:192.70px;top:313.11px;font-size:10.5px;line-height:10.5px;color:#6b6f74;font-weight:normal;white-space:nowrap;text-align:right;-webkit-text-stroke:0.3px currentColor;letter-spacing:0.2px">Completion</div><div style="position:absolute;right:192.70px;top:328.11px;font-size:10.5px;line-height:10.5px;color:#6b6f74;font-weight:normal;white-space:nowrap;text-align:right;-webkit-text-stroke:0.3px currentColor;letter-spacing:0.2px">rate</div><div style="position:absolute;left:776.5px;top:325.6px;width:54.799999999999955px;height:1px;background-image:linear-gradient(to right,#aeb2b6 66%,transparent 66%);background-size:3px 1px"></div><div style="position:absolute;left:812.5px;top:341px;width:18.799999999999955px;height:1px;background-image:linear-gradient(to right,#aeb2b6 66%,transparent 66%);background-size:3px 1px"></div><div style="position:absolute;left:857.30px;top:313.11px;font-size:10.5px;line-height:10.5px;color:#6b6f74;font-weight:normal;white-space:nowrap;-webkit-text-stroke:0.3px currentColor;letter-spacing:0.2px">Abandonments</div><div style="position:absolute;left:857.3px;top:325.6px;width:72.20000000000005px;height:1px;background-image:linear-gradient(to right,#aeb2b6 66%,transparent 66%);background-size:3px 1px"></div><div style="position:absolute;left:955.75px;top:312px;width:23.25px;height:20px;overflow:hidden"><div style="position:absolute;left:0.00px;top:1.11px;font-size:10.5px;line-height:10.5px;color:#6b6f74;font-weight:normal;white-space:nowrap;-webkit-text-stroke:0.3px currentColor;letter-spacing:-0.2px">Abandonment rate</div></div><div style="position:absolute;left:955.75px;top:325.6px;width:23.25px;height:1px;background-image:linear-gradient(to right,#aeb2b6 66%,transparent 66%);background-size:3px 1px"></div><div style="position:absolute;left:433.00px;top:374.01px;font-size:10.5px;line-height:10.5px;color:#3c4043;font-weight:normal;white-space:nowrap;">1</div><div style="position:absolute;left:463.10px;top:374.01px;font-size:10.5px;line-height:10.5px;color:#3c4043;font-weight:normal;white-space:nowrap;-webkit-text-stroke:0.4px currentColor;letter-spacing:0.35px">First open/visit</div><div style="position:absolute;left:578.00px;top:374.01px;font-size:10.5px;line-height:10.5px;color:#3c4043;font-weight:normal;white-space:nowrap;-webkit-text-stroke:0.4px currentColor;letter-spacing:0.3px">Total</div><div style="position:absolute;right:273.60px;top:374.01px;font-size:10.5px;line-height:10.5px;color:#202124;font-weight:normal;white-space:nowrap;text-align:right;"><span style="color:#3c4043;-webkit-text-stroke:0.2px #3c4043">16</span> <span style="color:#80868b">(100.0%)</span></div><div style="position:absolute;right:192.70px;top:374.01px;font-size:10.5px;line-height:10.5px;color:#3c4043;font-weight:normal;white-space:nowrap;text-align:right;-webkit-text-stroke:0.15px currentColor">75%</div><div style="position:absolute;right:94.50px;top:374.01px;font-size:10.5px;line-height:10.5px;color:#3c4043;font-weight:normal;white-space:nowrap;text-align:right;-webkit-text-stroke:0.15px currentColor">4</div><div style="position:absolute;left:578.00px;top:402.26px;font-size:10.5px;line-height:10.5px;color:#3c4043;font-weight:normal;white-space:nowrap;-webkit-text-stroke:0.4px currentColor;letter-spacing:0.3px">desktop</div><div style="position:absolute;right:273.60px;top:402.26px;font-size:10.5px;line-height:10.5px;color:#202124;font-weight:normal;white-space:nowrap;text-align:right;"><span style="color:#3c4043;-webkit-text-stroke:0.2px #3c4043">13</span> <span style="color:#80868b">(100.0%)</span></div><div style="position:absolute;right:192.70px;top:402.26px;font-size:10.5px;line-height:10.5px;color:#3c4043;font-weight:normal;white-space:nowrap;text-align:right;-webkit-text-stroke:0.15px currentColor">76.92%</div><div style="position:absolute;right:94.50px;top:402.26px;font-size:10.5px;line-height:10.5px;color:#3c4043;font-weight:normal;white-space:nowrap;text-align:right;-webkit-text-stroke:0.15px currentColor">3</div><div style="position:absolute;left:578.00px;top:430.51px;font-size:10.5px;line-height:10.5px;color:#3c4043;font-weight:normal;white-space:nowrap;-webkit-text-stroke:0.4px currentColor;letter-spacing:0.3px">mobile</div><div style="position:absolute;right:273.60px;top:430.51px;font-size:10.5px;line-height:10.5px;color:#202124;font-weight:normal;white-space:nowrap;text-align:right;"><span style="color:#3c4043;-webkit-text-stroke:0.2px #3c4043">3</span> <span style="color:#80868b">(100.0%)</span></div><div style="position:absolute;right:192.70px;top:430.51px;font-size:10.5px;line-height:10.5px;color:#3c4043;font-weight:normal;white-space:nowrap;text-align:right;-webkit-text-stroke:0.15px currentColor">66.67%</div><div style="position:absolute;right:94.50px;top:430.51px;font-size:10.5px;line-height:10.5px;color:#3c4043;font-weight:normal;white-space:nowrap;text-align:right;-webkit-text-stroke:0.15px currentColor">1</div><div style="position:absolute;left:433.00px;top:458.76px;font-size:10.5px;line-height:10.5px;color:#3c4043;font-weight:normal;white-space:nowrap;">2</div><div style="position:absolute;left:463.10px;top:458.76px;font-size:10.5px;line-height:10.5px;color:#3c4043;font-weight:normal;white-space:nowrap;-webkit-text-stroke:0.4px currentColor;letter-spacing:0.35px">Session start</div><div style="position:absolute;left:578.00px;top:458.76px;font-size:10.5px;line-height:10.5px;color:#3c4043;font-weight:normal;white-space:nowrap;-webkit-text-stroke:0.4px currentColor;letter-spacing:0.3px">Total</div><div style="position:absolute;right:273.60px;top:458.76px;font-size:10.5px;line-height:10.5px;color:#202124;font-weight:normal;white-space:nowrap;text-align:right;"><span style="color:#3c4043;-webkit-text-stroke:0.2px #3c4043">12</span> <span style="color:#80868b">(75.0%)</span></div><div style="position:absolute;right:192.70px;top:458.76px;font-size:10.5px;line-height:10.5px;color:#3c4043;font-weight:normal;white-space:nowrap;text-align:right;-webkit-text-stroke:0.15px currentColor">100%</div><div style="position:absolute;right:94.50px;top:458.76px;font-size:10.5px;line-height:10.5px;color:#3c4043;font-weight:normal;white-space:nowrap;text-align:right;-webkit-text-stroke:0.15px currentColor">0</div><div style="position:absolute;left:578.00px;top:487.01px;font-size:10.5px;line-height:10.5px;color:#3c4043;font-weight:normal;white-space:nowrap;-webkit-text-stroke:0.4px currentColor;letter-spacing:0.3px">desktop</div><div style="position:absolute;right:273.60px;top:487.01px;font-size:10.5px;line-height:10.5px;color:#202124;font-weight:normal;white-space:nowrap;text-align:right;"><span style="color:#3c4043;-webkit-text-stroke:0.2px #3c4043">10</span> <span style="color:#80868b">(76.9%)</span></div><div style="position:absolute;right:192.70px;top:487.01px;font-size:10.5px;line-height:10.5px;color:#3c4043;font-weight:normal;white-space:nowrap;text-align:right;-webkit-text-stroke:0.15px currentColor">100%</div><div style="position:absolute;right:94.50px;top:487.01px;font-size:10.5px;line-height:10.5px;color:#3c4043;font-weight:normal;white-space:nowrap;text-align:right;-webkit-text-stroke:0.15px currentColor">0</div><div style="position:absolute;left:578.00px;top:515.26px;font-size:10.5px;line-height:10.5px;color:#3c4043;font-weight:normal;white-space:nowrap;-webkit-text-stroke:0.4px currentColor;letter-spacing:0.3px">mobile</div><div style="position:absolute;right:273.60px;top:515.26px;font-size:10.5px;line-height:10.5px;color:#202124;font-weight:normal;white-space:nowrap;text-align:right;"><span style="color:#3c4043;-webkit-text-stroke:0.2px #3c4043">2</span> <span style="color:#80868b">(66.7%)</span></div><div style="position:absolute;right:192.70px;top:515.26px;font-size:10.5px;line-height:10.5px;color:#3c4043;font-weight:normal;white-space:nowrap;text-align:right;-webkit-text-stroke:0.15px currentColor">100%</div><div style="position:absolute;right:94.50px;top:515.26px;font-size:10.5px;line-height:10.5px;color:#3c4043;font-weight:normal;white-space:nowrap;text-align:right;-webkit-text-stroke:0.15px currentColor">0</div><div style="position:absolute;left:983px;top:301px;width:7px;height:133px;background:#c6c6c6"></div><div style="position:absolute;left:421px;top:544px;width:505px;height:6.5px;background:#c8c8c8"></div><div style="position:absolute;left:1022px;top:561px;width:2px;height:2px;background:#333;border-radius:1px 0 0 0"></div><svg style="position:absolute;left:564px;top:306px" width="12" height="16" viewBox="0 0 12 16"><path d="M1.5 1 L1.5 12.5 L4.3 9.8 L6.3 14.3 L8 13.5 L6.1 9.1 L10 9.1 Z" fill="#111" stroke="#fff" stroke-width="0.8"/></svg>
</body></html>
